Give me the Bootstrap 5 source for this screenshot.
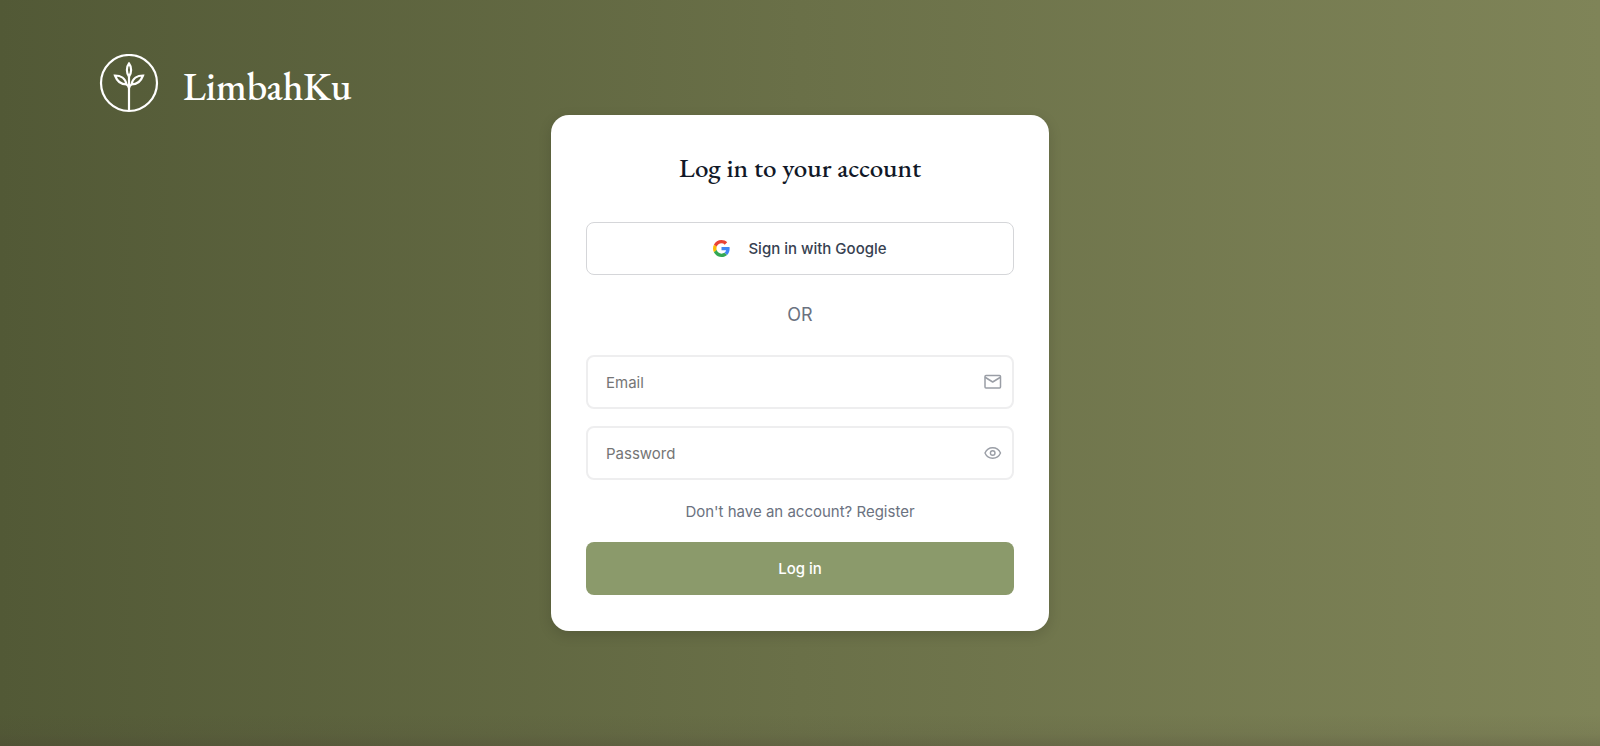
<!DOCTYPE html>
<html lang="en">
<head>
<meta charset="utf-8">
<meta name="viewport" content="width=device-width, initial-scale=1">
<title>LimbahKu – Log in</title>
<link href="https://cdn.jsdelivr.net/npm/bootstrap@5.3.0/dist/css/bootstrap.min.css" rel="stylesheet">
<style>
  body {
    font-family: Inter, "Liberation Sans", sans-serif;
    color: #6b7280;
  }
  .login-page {
    background:
      linear-gradient(to top, rgba(70, 60, 50, .24), rgba(70, 60, 50, .08) 12px, transparent 32px),
      linear-gradient(to right, #525936, #6a7048 50%, #7f8458);
  }
  /* Brand and card share one cell, so the card stays centred in the window */
  .login-page > * { grid-area: 1 / 1; }
  .brand-link {
    margin: 54px 0 0 99px;
    gap: 24px;
    font-family: "EB Garamond", "Liberation Serif", serif;
    font-size: 39px;
    line-height: 60px;
    font-weight: 500;
    color: #fff;
  }
  .brand-name { padding-top: 3px; }
  .login-card {
    width: 100%;
    max-width: 498px;
    padding: 36px 35px;
    border-radius: 18px;
    box-shadow: 0 4px 14px rgba(0, 0, 0, .14);
  }
  .login-title {
    font-family: "EB Garamond", "Liberation Serif", serif;
    font-size: 27px;
    line-height: 34px;
    font-weight: 500;
    color: #111827;
    margin-bottom: 37px;
  }
  .login-control {
    height: 53px;
    border-radius: 8px;
    font-size: 15px;
    line-height: 24px;
  }
  input.login-control {
    height: 54px;
    padding: 0 48px 0 18px;
    border: 2px solid #eeeeef;
    color: #374151;
  }
  input.login-control::placeholder { color: #757575; }
  .btn-google {
    gap: 18px;
    border: 1px solid #d5d6d9;
    color: #374151;
    font-weight: 500;
  }
  .btn-login, .btn-login:hover {
    background: #8b9a6b;
    color: #fff;
    font-weight: 500;
  }
  .or-text { font-size: 18px; line-height: 28px; margin: 26px 0; }
  .field-gap { margin-bottom: 17px; }
  .field-icon { right: 12px; color: #9a9ea6; }
  .register-text { font-size: 15px; line-height: 24px; margin: 20px 0 18px; }
</style>
</head>
<body>
<div class="login-page d-grid min-vh-100">
  <header class="align-self-start">
    <a href="#" class="brand-link d-inline-flex align-items-start text-decoration-none">
      <svg width="60" height="60" viewBox="0 0 60 60" fill="none" stroke="#fff" stroke-width="2.200" aria-hidden="true">
        <circle cx="30" cy="29" r="28"/>
        <path d="M30 57V22"/>
        <path d="M30 22.500C27.200 19 27.200 13 30 9.500C32.800 13 32.800 19 30 22.500Z"/>
        <path d="M30 34C29.500 32 28.500 31 27.500 30.500C22 30.500 18 27 16 21.500C21.500 21.500 26.500 24.500 27.500 30.500"/>
        <path d="M30 34C30.500 32 31.500 31 32.500 30.500C38 30.500 42 27 44 21.500C38.500 21.500 33.500 24.500 32.500 30.500"/>
      </svg>
      <span class="brand-name">LimbahKu</span>
    </a>
  </header>

  <main class="d-flex align-items-center justify-content-center pe-none">
    <form class="login-card bg-white pe-auto">
      <h1 class="login-title text-center">Log in to your account</h1>
      <button type="button" class="btn btn-google login-control w-100 d-flex align-items-center justify-content-center">
        <svg width="17" height="17" viewBox="0 0 48 48" aria-hidden="true">
          <path fill="#EA4335" d="M24 9.500c3.540 0 6.710 1.220 9.210 3.600l6.850-6.850C35.900 2.380 30.470 0 24 0 14.620 0 6.510 5.380 2.560 13.220l7.980 6.190C12.430 13.720 17.740 9.500 24 9.500z"/>
          <path fill="#4285F4" d="M46.980 24.550c0-1.570-.15-3.090-.38-4.550H24v9.020h12.940c-.58 2.960-2.260 5.480-4.780 7.180l7.730 6c4.510-4.180 7.090-10.360 7.090-17.650z"/>
          <path fill="#FBBC05" d="M10.530 28.590c-.48-1.450-.76-2.990-.76-4.590s.27-3.140.76-4.590l-7.980-6.190C.92 16.460 0 20.120 0 24c0 3.880.92 7.540 2.560 10.780l7.970-6.190z"/>
          <path fill="#34A853" d="M24 48c6.480 0 11.930-2.130 15.890-5.810l-7.730-6c-2.150 1.450-4.920 2.300-8.160 2.300-6.260 0-11.570-4.220-13.470-9.910l-7.980 6.190C6.510 42.620 14.620 48 24 48z"/>
        </svg>
        <span>Sign in with Google</span>
      </button>
      <p class="or-text text-center">OR</p>
      <div class="field-gap position-relative d-flex align-items-center">
        <input type="email" id="email" class="form-control login-control" placeholder="Email" aria-label="Email">
        <label for="email" class="field-icon position-absolute d-flex">
          <svg width="18" height="18" viewBox="0 0 18 18" fill="none" stroke="currentColor" stroke-width="1.500" stroke-linejoin="round" stroke-linecap="round" aria-hidden="true">
            <rect x="1" y="2.500" width="15.500" height="12.500" rx="1"/>
            <path d="M1.500 4.500L8.700 9L16 4.500"/>
          </svg>
        </label>
      </div>
      <div class="position-relative d-flex align-items-center">
        <input type="password" id="password" class="form-control login-control" placeholder="Password" aria-label="Password">
        <label for="password" class="field-icon position-absolute d-flex">
          <svg width="18" height="18" viewBox="0 0 18 18" fill="none" stroke="currentColor" stroke-width="1.400" aria-hidden="true">
            <path d="M1 9C2.500 5.500 5.500 3.800 8.700 3.800S15 5.500 16.500 9C15 12.500 11.900 14.200 8.700 14.200S2.500 12.500 1 9Z"/>
            <circle cx="8.700" cy="9" r="2.300"/>
          </svg>
        </label>
      </div>
      <p class="register-text text-center">Don't have an account? <a href="#" class="text-reset text-decoration-none">Register</a></p>
      <button type="submit" class="btn btn-login login-control border-0 w-100">Log in</button>
    </form>
  </main>
</div>
<script src="https://cdn.jsdelivr.net/npm/bootstrap@5.3.0/dist/js/bootstrap.bundle.min.js"></script>
</body>
</html>
